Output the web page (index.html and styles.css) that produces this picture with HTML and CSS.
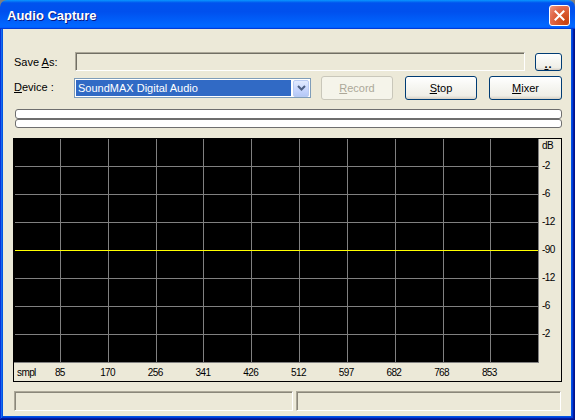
FILE: index.html
```html
<!DOCTYPE html>
<html>
<head>
<meta charset="utf-8">
<link rel="stylesheet" href="styles.css">
</head>
<body>
<div class="window">
  <div class="titlebar">
    <span class="title">Audio Capture</span>
    <span class="close">
      <svg width="11" height="11" viewBox="0 0 11 11"><path d="M1.5 1.5 L9.5 9.5 M9.5 1.5 L1.5 9.5" stroke="#fff" stroke-width="2" stroke-linecap="square"/></svg>
    </span>
  </div>
  <div class="frame">
    <div class="client">
      <div class="row row1">
        <span class="label">Save <u>A</u>s:</span>
        <span class="textbox"></span>
        <span class="btn small"><u>.</u>.</span>
      </div>
      <div class="row row2">
        <span class="label lbl2"><u>D</u>evice :</span>
        <span class="combo">
          <span class="sel">SoundMAX Digital Audio</span>
          <span class="drop"><svg width="9" height="6" viewBox="0 0 9 6"><path d="M1 1 L4.5 4.5 L8 1" stroke="#4D6185" stroke-width="2" fill="none"/></svg></span>
        </span>
        <span class="btn disabled rec"><u>R</u>ecord</span>
        <span class="btn stop"><u>S</u>top</span>
        <span class="btn mixer"><u>M</u>ixer</span>
      </div>
      <div class="bars">
        <div class="bar b1"></div>
        <div class="bar b2"></div>
      </div>
      <div class="graph">
        <svg class="plot" width="525" height="224" viewBox="0 0 525 224">
          <rect x="0" y="0" width="525" height="224" fill="#000"/>
          <g fill="#808080">
            <rect x="46" y="0" width="1" height="224"/>
            <rect x="94" y="0" width="1" height="224"/>
            <rect x="142" y="0" width="1" height="224"/>
            <rect x="189" y="0" width="1" height="224"/>
            <rect x="237" y="0" width="1" height="224"/>
            <rect x="285" y="0" width="1" height="224"/>
            <rect x="333" y="0" width="1" height="224"/>
            <rect x="381" y="0" width="1" height="224"/>
            <rect x="429" y="0" width="1" height="224"/>
            <rect x="476" y="0" width="1" height="224"/>
            <rect x="524" y="0" width="1" height="224"/>
            <rect x="1" y="27" width="524" height="1"/>
            <rect x="1" y="55" width="524" height="1"/>
            <rect x="1" y="83" width="524" height="1"/>
            <rect x="1" y="139" width="524" height="1"/>
            <rect x="1" y="167" width="524" height="1"/>
            <rect x="1" y="195" width="524" height="1"/>
            <rect x="0" y="223" width="525" height="1"/>
          </g>
          <rect x="1" y="111" width="523" height="1" fill="#FFFF00"/>
        </svg>
        <div class="yaxis">
          <span class="yl first">dB</span>
          <span class="yl">-2</span>
          <span class="yl">-6</span>
          <span class="yl">-12</span>
          <span class="yl">-90</span>
          <span class="yl">-12</span>
          <span class="yl">-6</span>
          <span class="yl">-2</span>
        </div>
        <div class="xaxis">
          <span class="xl smpl">smpl</span>
          <span class="xl">85</span>
          <span class="xl">170</span>
          <span class="xl">256</span>
          <span class="xl">341</span>
          <span class="xl">426</span>
          <span class="xl">512</span>
          <span class="xl">597</span>
          <span class="xl">682</span>
          <span class="xl">768</span>
          <span class="xl">853</span>
        </div>
      </div>
      <div class="status">
        <span class="panel p1"></span>
        <span class="panel p2"></span>
      </div>
    </div>
  </div>
</div>
</body>
</html>
```
FILE: styles.css
```css
html, body {
  margin: 0;
  padding: 0;
  background: #7f7f7f;
}
.window {
  width: 575px;
  height: 420px;
  display: flex;
  flex-direction: column;
  font-family: "Liberation Sans", Arial, sans-serif;
  font-size: 11px;
  color: #000;
  border-radius: 7px 7px 0 0;
  overflow: hidden;
}
.titlebar {
  height: 29px;
  flex: none;
  display: flex;
  align-items: center;
  justify-content: space-between;
  padding: 0 5px 0 7px;
  box-sizing: border-box;
  background: linear-gradient(180deg, #0997ff 0, #0053ee 10%, #0050ee 40%, #0066ff 86%, #0066ff 92%, #005bff 95%, #003dd7 97%, #003dd7 100%);
}
.title {
  color: #fff;
  font-weight: bold;
  font-size: 13px;
  text-shadow: 1px 1px 0 #0a1883;
  margin-top: 1px;
}
.close {
  width: 21px;
  height: 21px;
  box-sizing: border-box;
  border: 1px solid #fff;
  border-radius: 3px;
  background: radial-gradient(circle at 85% 85%, #c8420f 0, #da5b33 45%, #e1694a 65%, #e98a72 90%, #f2b7a6 100%);
  display: flex;
  align-items: center;
  justify-content: center;
  margin-top: 2px;
}
.close svg { display: block; }
.frame {
  flex: 1;
  display: flex;
  padding: 0 4px 4px 3px;
  background: #0054e3;
  box-shadow: inset -1px -1px #00138c, inset 1px 0 #0831d9, inset -2px -2px #001ea0, inset 2px 0 #166aee, inset -3px -3px #003bda;
}
.client {
  flex: 1;
  background: #ece9d8;
  padding: 23px 9px 5px 11px;
  display: flex;
  flex-direction: column;
}
.row {
  display: flex;
  align-items: center;
}
.row1 { height: 19px; }
.row2 { height: 24px; margin-top: 5px; }
.label { flex: none; }
.row1 .label { width: 61px; }
.row2 .label { width: 60px; margin-bottom: 3px; }
.textbox {
  width: 450px;
  height: 19px;
  box-sizing: border-box;
  border: 1px solid;
  border-color: #aca899 #fff #fff #aca899;
  box-shadow: inset 1px 1px #716f64;
  background: #ece9d8;
}
.btn {
  flex: none;
  box-sizing: border-box;
  border: 1px solid #003c74;
  border-radius: 3px;
  background: linear-gradient(180deg, #ffffff 0, #f7f7f3 40%, #efeee7 85%, #d6d0c5 100%);
  display: flex;
  align-items: center;
  justify-content: center;
}
.btn.small {
  width: 27px;
  height: 18px;
  margin-left: 10px;
  align-self: flex-start;
  margin-top: 1px;
  font-weight: bold;
  letter-spacing: 1px;
  padding-top: 3px;
}
.combo {
  width: 237px;
  height: 20px;
  box-sizing: border-box;
  border: 1px solid #7f9db9;
  background: #fff;
  display: flex;
  align-items: center;
  padding: 1px;
}
.sel {
  width: 216px;
  height: 16px;
  background: #316ac5;
  color: #fff;
  display: flex;
  align-items: center;
  padding-left: 2px;
  box-sizing: border-box;
}
.drop {
  width: 16px;
  height: 17px;
  margin-left: 2px;
  box-sizing: border-box;
  border: 1px solid #b9cbf3;
  border-radius: 2px;
  background: linear-gradient(180deg, #e2ebff 0, #c6d5fd 60%, #b4c8f6 100%);
  display: flex;
  align-items: center;
  justify-content: center;
}
.drop svg { display: block; }
.rec, .stop, .mixer { height: 24px; }
.rec { width: 72px; margin-left: 10px; }
.stop { width: 72px; margin-left: 12px; }
.mixer { width: 73px; margin-left: 12px; }
.btn.disabled {
  border-color: #c9c7ba;
  background: #f5f4ea;
  color: #aca899;
}
.bars {
  margin-top: 9px;
  margin-left: 1px;
  width: 547px;
  display: flex;
  flex-direction: column;
}
.bar {
  box-sizing: border-box;
  border: 1px solid #6e6e6e;
  border-radius: 3px;
  background: #fff;
}
.b1 { height: 10px; }
.b2 { height: 9px; }
.graph {
  margin-top: 10px;
  margin-left: -1px;
  width: 549px;
  height: 244px;
  box-sizing: border-box;
  border: 1px solid #000;
  display: grid;
  grid-template-columns: 525px 1fr;
  grid-template-rows: 224px 1fr;
}
.plot { display: block; }
.yaxis {
  display: flex;
  flex-direction: column;
  padding-left: 3px;
}
.yl {
  height: 28px;
  line-height: 28px;
  font-size: 10px;
  letter-spacing: -0.6px;
}
.yl.first {
  height: 13px;
  line-height: 14px;
}
.xaxis {
  display: flex;
  align-items: center;
  height: 18px;
}
.xl {
  width: 47.73px;
  flex: none;
  text-align: center;
  font-size: 10px;
  letter-spacing: -0.6px;
}
.xl.smpl {
  width: 22px;
  text-align: left;
  padding-left: 3px;
  box-sizing: border-box;
  overflow: visible;
  white-space: nowrap;
}
.status {
  margin-top: 9px;
  height: 20px;
  display: flex;
  width: 547px;
}
.panel {
  box-sizing: border-box;
  height: 20px;
  border: 1px solid;
  border-color: #aca899 #fff #fff #aca899;
  box-shadow: inset 1px 1px #8a877a;
}
.p1 { width: 279px; }
.p2 { flex: 1; margin-left: 3px; }
```
